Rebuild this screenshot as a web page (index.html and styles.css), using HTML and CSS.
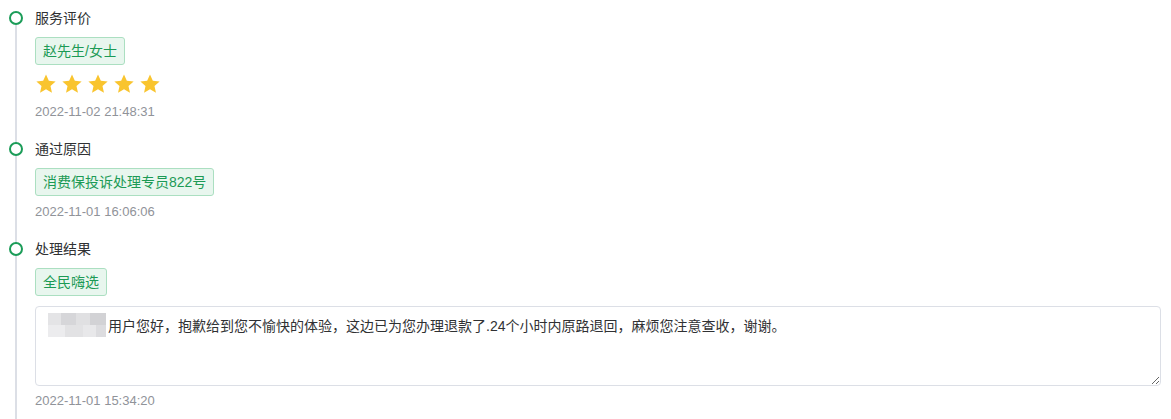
FILE: index.html
```html
<!DOCTYPE html>
<html lang="zh-CN">
<head>
  <meta charset="UTF-8" />
  <title>处理记录</title>
  <link rel="stylesheet" href="styles.css">
</head>
<body>
  <ul class="timeline">
    <li class="item">
      <div class="rail"><span class="node"></span></div>
      <div class="content">
        <div class="title">服务评价</div>
        <span class="tag">赵先生/女士</span>
        <div class="stars">
          <svg viewBox="0 0 24 24"><path d="M12 1.5l3.1 6.9 7.4.8-5.6 5 1.6 7.4L12 17.8l-6.5 3.8 1.6-7.4-5.6-5 7.4-.8z"/></svg>
          <svg viewBox="0 0 24 24"><path d="M12 1.5l3.1 6.9 7.4.8-5.6 5 1.6 7.4L12 17.8l-6.5 3.8 1.6-7.4-5.6-5 7.4-.8z"/></svg>
          <svg viewBox="0 0 24 24"><path d="M12 1.5l3.1 6.9 7.4.8-5.6 5 1.6 7.4L12 17.8l-6.5 3.8 1.6-7.4-5.6-5 7.4-.8z"/></svg>
          <svg viewBox="0 0 24 24"><path d="M12 1.5l3.1 6.9 7.4.8-5.6 5 1.6 7.4L12 17.8l-6.5 3.8 1.6-7.4-5.6-5 7.4-.8z"/></svg>
          <svg viewBox="0 0 24 24"><path d="M12 1.5l3.1 6.9 7.4.8-5.6 5 1.6 7.4L12 17.8l-6.5 3.8 1.6-7.4-5.6-5 7.4-.8z"/></svg>
        </div>
        <div class="time">2022-11-02 21:48:31</div>
      </div>
    </li>
    <li class="item">
      <div class="rail"><span class="node"></span></div>
      <div class="content">
        <div class="title">通过原因</div>
        <span class="tag">消费保投诉处理专员822号</span>
        <div class="time">2022-11-01 16:06:06</div>
      </div>
    </li>
    <li class="item">
      <div class="rail"><span class="node"></span></div>
      <div class="content">
        <div class="title">处理结果</div>
        <span class="tag">全民嗨选</span>
        <div class="reply"><span class="masked"></span>用户您好，抱歉给到您不愉快的体验，这边已为您办理退款了.24个小时内原路退回，麻烦您注意查收，谢谢。</div>
        <div class="time">2022-11-01 15:34:20</div>
      </div>
    </li>
  </ul>
</body>
</html>
```

FILE: styles.css
```css
body {
  margin: 0;
  font-family: "Liberation Sans", "Noto Sans CJK SC", sans-serif;
  color: #303133;
  background: #fff;
}
.timeline {
  list-style: none;
  margin: 0;
  padding: 8px 10px 0 0;
  background: linear-gradient(#dcdfe6, #dcdfe6) no-repeat 15px 25px / 2px 100%;
}
.item {
  display: grid;
  grid-template-columns: 32px 1fr;
  column-gap: 3px;
  padding-bottom: 18px;
}
.rail {
  display: flex;
  justify-content: center;
}
.node {
  width: 10px;
  height: 10px;
  margin-top: 3px;
  border: 2px solid #1b9c58;
  border-radius: 50%;
  background: #fff;
}
.title {
  font-size: 14px;
  line-height: 20px;
}
.tag {
  display: inline-block;
  margin-top: 9px;
  padding: 0 7px;
  height: 26px;
  line-height: 26px;
  font-size: 14px;
  color: #1c9a55;
  background: #e8f6ee;
  border: 1px solid #abdfc1;
  border-radius: 3px;
}
.stars {
  display: flex;
  gap: 4px;
  margin-top: 8px;
  height: 23px;
}
.stars svg {
  width: 22px;
  height: 22px;
  fill: #f9c42e;
}
.time {
  margin-top: 7px;
  font-size: 13px;
  line-height: 18px;
  color: #909399;
}
.reply {
  margin-top: 10px;
  height: 68px;
  padding: 6px 12px 4px;
  font-size: 14px;
  line-height: 21px;
  border: 1px solid #dcdfe6;
  border-radius: 4px;
  overflow: auto;
  resize: vertical;
}
.masked {
  display: inline-block;
  width: 58px;
  height: 24px;
  margin-right: 2px;
  vertical-align: -6px;
  background:
    linear-gradient(90deg, #e4e4e6 0 22%, #d6d6d9 22% 48%, #e0e0e2 48% 72%, #d2d2d5 72%) top / 100% 50% no-repeat,
    linear-gradient(90deg, #ececee 0 30%, #e2e2e4 30% 60%, #e8e8ea 60% 82%, #dcdcdf 82%) bottom / 100% 50% no-repeat;
}
.reply + .time {
  margin-top: 6px;
}
```
